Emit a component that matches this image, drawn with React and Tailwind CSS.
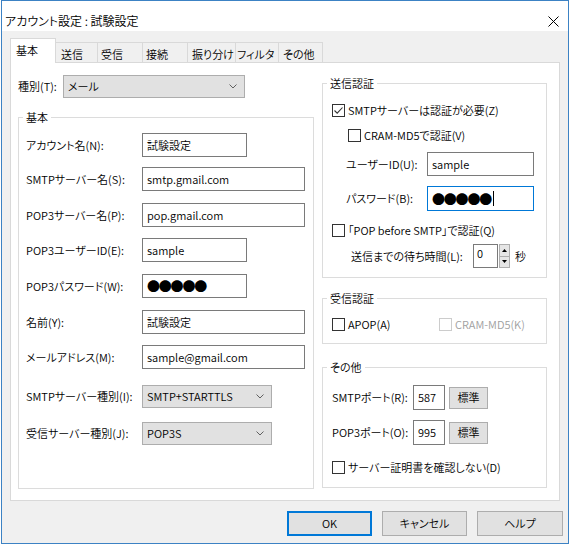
import React from 'react';

const font = "font-['Noto_Sans_CJK_JP',sans-serif] font-[350] [font-feature-settings:'palt']";

const Chevron = () => (
  <svg width="8" height="5" viewBox="0 0 8 5">
    <path d="M0.5 0.5 L4 4 L7.5 0.5" fill="none" stroke="#606060" strokeWidth="1" />
  </svg>
);

const Check = ({ checked, disabled, label, className = '' }) => (
  <div className={`flex h-[16px] items-center whitespace-nowrap ${className}`}>
    <span
      className={`flex h-[13px] w-[13px] shrink-0 items-center justify-center border bg-white ${
        disabled ? 'border-[#cccccc]' : 'border-[#333333]'
      }`}
    >
      {checked && (
        <svg width="11" height="11" viewBox="0 0 11 11">
          <path d="M1.5 5.5 L4.2 8.2 L9.5 2.5" fill="none" stroke="#333333" strokeWidth="1.1" />
        </svg>
      )}
    </span>
    <span className={`ml-[3px] leading-[16px] ${disabled ? 'text-[#a0a0a0]' : 'text-black'}`}>{label}</span>
  </div>
);

const Box = ({ children, className = '', focused }) => (
  <div
    className={`flex shrink-0 items-center whitespace-nowrap border bg-white pl-[4px] ${
      focused ? 'border-[#0078d7]' : 'border-[#7a7a7a]'
    } ${className}`}
  >
    {children}
  </div>
);

const Dots = () => <span className="text-[13px] leading-[16px] tracking-[-1.2px]">●●●●●</span>;

const Select = ({ value, className = '' }) => (
  <div
    className={`flex h-[23px] shrink-0 items-center justify-between border border-[#adadad] bg-[#e1e1e1] pl-[4px] pr-[7px] ${className}`}
  >
    <span>{value}</span>
    <Chevron />
  </div>
);

const Btn = ({ children, className = '' }) => (
  <div className={`flex shrink-0 items-center justify-center border border-[#adadad] bg-[#e1e1e1] ${className}`}>
    {children}
  </div>
);

const Legend = ({ children }) => <legend className="ml-[4px] px-[3px] leading-[16px]">{children}</legend>;

const Label = ({ children, className = '' }) => (
  <span className={`shrink-0 whitespace-nowrap ${className}`}>{children}</span>
);

const Row = ({ label, className = '', children }) => (
  <div className={`flex items-center ${className}`}>
    <Label className="w-[116px]">{label}</Label>
    {children}
  </div>
);

const tabs = [
  { label: '送信', cls: 'w-[42px] pl-[5px]' },
  { label: '受信', cls: 'w-[45px] pl-[3px]' },
  { label: '接続', cls: 'w-[45px] pl-[3px]' },
  { label: '振り分け', cls: 'w-[48px] pl-[4px]' },
  { label: 'フィルタ', cls: 'w-[43px] pl-[1px]' },
  { label: 'その他', cls: 'w-[44px] pl-[4px]' },
];

export default function App() {
  return (
    <div className={`h-[546px] w-[571px] bg-white text-[11px] text-black ${font}`}>
      <div className="ml-[1px] flex h-[544px] w-[568px] flex-col border border-[#3c82c4]">
        {/* title bar */}
        <div className="flex h-[30px] shrink-0 items-center justify-between bg-white pl-[3px] pr-[9px] pt-[10px]">
          <span className="text-[12px] leading-[16px]">アカウント設定 : 試験設定</span>
          <svg width="11" height="11" viewBox="0 0 11 11">
            <path d="M0.5 0.5 L10.5 10.5 M10.5 0.5 L0.5 10.5" stroke="#000" strokeWidth="1" />
          </svg>
        </div>

        <div className="flex flex-1 flex-col bg-[#f0f0f0] px-[8px] pt-[7px]">
          {/* tabs */}
          <div className="flex items-end whitespace-nowrap">
            <div className="relative z-10 -mb-px h-[25px] w-[46px] border-x border-t border-[#d9d9d9] bg-white pl-[5px] pt-[3px] leading-[16px]">
              基本
            </div>
            {tabs.map((t) => (
              <div key={t.label} className={`h-[20px] border-r border-t border-[#d9d9d9] pt-[3px] leading-[16px] ${t.cls}`}>
                {t.label}
              </div>
            ))}
          </div>

          {/* panel */}
          <div className="flex h-[439px] border border-[#d9d9d9] bg-white pl-[7px] pt-[12px]">
            {/* left column */}
            <div className="flex w-[296px] flex-col">
              <div className="flex h-[23px] items-center">
                <Label className="w-[45px]">種別(T):</Label>
                <Select value="メール" className="w-[182px]" />
              </div>
              <fieldset className="mt-[11px] h-[380px] border border-[#dcdcdc]">
                <Legend>基本</Legend>
                <div className="flex flex-col pl-[7px]">
                  <Row label="アカウント名(N):" className="mt-[8px]">
                    <Box className="h-[24px] w-[105px]">試験設定</Box>
                  </Row>
                  <Row label="SMTPサーバー名(S):" className="mt-[10px]">
                    <Box className="h-[24px] w-[163px]">smtp.gmail.com</Box>
                  </Row>
                  <Row label="POP3サーバー名(P):" className="mt-[12px]">
                    <Box className="h-[24px] w-[163px]">pop.gmail.com</Box>
                  </Row>
                  <Row label="POP3ユーザーID(E):" className="mt-[11px]">
                    <Box className="h-[24px] w-[105px]">sample</Box>
                  </Row>
                  <Row label="POP3パスワード(W):" className="mt-[12px]">
                    <Box className="h-[24px] w-[105px]">
                      <Dots />
                    </Box>
                  </Row>
                  <Row label="名前(Y):" className="mt-[12px]">
                    <Box className="h-[24px] w-[163px]">試験設定</Box>
                  </Row>
                  <Row label="メールアドレス(M):" className="mt-[11px]">
                    <Box className="h-[24px] w-[163px]">sample@gmail.com</Box>
                  </Row>
                  <Row label="SMTPサーバー種別(I):" className="mt-[16px]">
                    <Select value="SMTP+STARTTLS" className="w-[130px]" />
                  </Row>
                  <Row label="受信サーバー種別(J):" className="mt-[14px]">
                    <Select value="POP3S" className="w-[130px]" />
                  </Row>
                </div>
              </fieldset>
            </div>

            {/* right column */}
            <div className="ml-[8px] flex w-[225px] flex-col">
              <fieldset className="h-[203px] border border-[#dcdcdc]">
                <Legend>送信認証</Legend>
                <div className="flex flex-col pl-[9px]">
                  <Check checked label="SMTPサーバーは認証が必要(Z)" className="mt-[11px]" />
                  <Check label="CRAM-MD5で認証(V)" className="ml-[16px] mt-[9px]" />
                  <div className="ml-[14px] mt-[9px] flex items-center">
                    <Label className="w-[81px]">ユーザーID(U):</Label>
                    <Box className="h-[24px] w-[107px]">sample</Box>
                  </div>
                  <div className="ml-[14px] mt-[10px] flex items-center">
                    <Label className="w-[81px]">パスワード(B):</Label>
                    <Box focused className="h-[25px] w-[107px]">
                      <Dots />
                      <span className="ml-[2px] h-[15px] w-px bg-black" />
                    </Box>
                  </div>
                  <Check label="「POP before SMTP」で認証(Q)" className="mt-[11px]" />
                  <div className="ml-[19px] mt-[6px] flex items-center">
                    <Label className="w-[122px]">送信までの待ち時間(L):</Label>
                    <div className="flex h-[24px] w-[25px] shrink-0 items-start border border-[#7a7a7a] bg-white pl-[3px] leading-[16px]">
                      0
                    </div>
                    <div className="ml-[1px] flex h-[24px] w-[11px] shrink-0 flex-col">
                      <div className="flex flex-1 items-center justify-center border border-[#adadad] bg-[#e5e5e5]">
                        <svg width="5" height="3" viewBox="0 0 5 3">
                          <path d="M0 3 L2.5 0 L5 3 Z" fill="#000" />
                        </svg>
                      </div>
                      <div className="flex flex-1 items-center justify-center border-x border-b border-[#adadad] bg-[#e5e5e5]">
                        <svg width="5" height="3" viewBox="0 0 5 3">
                          <path d="M0 0 L2.5 3 L5 0 Z" fill="#000" />
                        </svg>
                      </div>
                    </div>
                    <span className="ml-[5px]">秒</span>
                  </div>
                </div>
              </fieldset>

              <fieldset className="mt-[12px] h-[54px] border border-[#dcdcdc]">
                <Legend>受信認証</Legend>
                <div className="mt-[10px] flex pl-[9px]">
                  <Check label="APOP(A)" className="w-[107px]" />
                  <Check disabled label="CRAM-MD5(K)" />
                </div>
              </fieldset>

              <fieldset className="mt-[15px] h-[129px] border border-[#dcdcdc]">
                <Legend>その他</Legend>
                <div className="flex flex-col pl-[9px]">
                  <div className="mt-[10px] flex items-center">
                    <Label className="w-[81px]">SMTPポート(R):</Label>
                    <Box className="h-[25px] w-[32px]">587</Box>
                    <Btn className="ml-[4px] h-[22px] w-[39px]">標準</Btn>
                  </div>
                  <div className="mt-[10px] flex items-center">
                    <Label className="w-[81px]">POP3ポート(O):</Label>
                    <Box className="h-[25px] w-[32px]">995</Box>
                    <Btn className="ml-[4px] h-[22px] w-[39px]">標準</Btn>
                  </div>
                  <Check label="サーバー証明書を確認しない(D)" className="mt-[14px]" />
                </div>
              </fieldset>
            </div>
          </div>

          {/* buttons */}
          <div className="mt-[10px] flex justify-end gap-[10px]">
            <div className="flex h-[25px] w-[85px] items-center justify-center border-2 border-[#0078d7] bg-[#e1e1e1]">OK</div>
            <Btn className="h-[25px] w-[85px]">キャンセル</Btn>
            <Btn className="-mr-[3px] h-[25px] w-[86px]">ヘルプ</Btn>
          </div>
        </div>
      </div>
    </div>
  );
}
